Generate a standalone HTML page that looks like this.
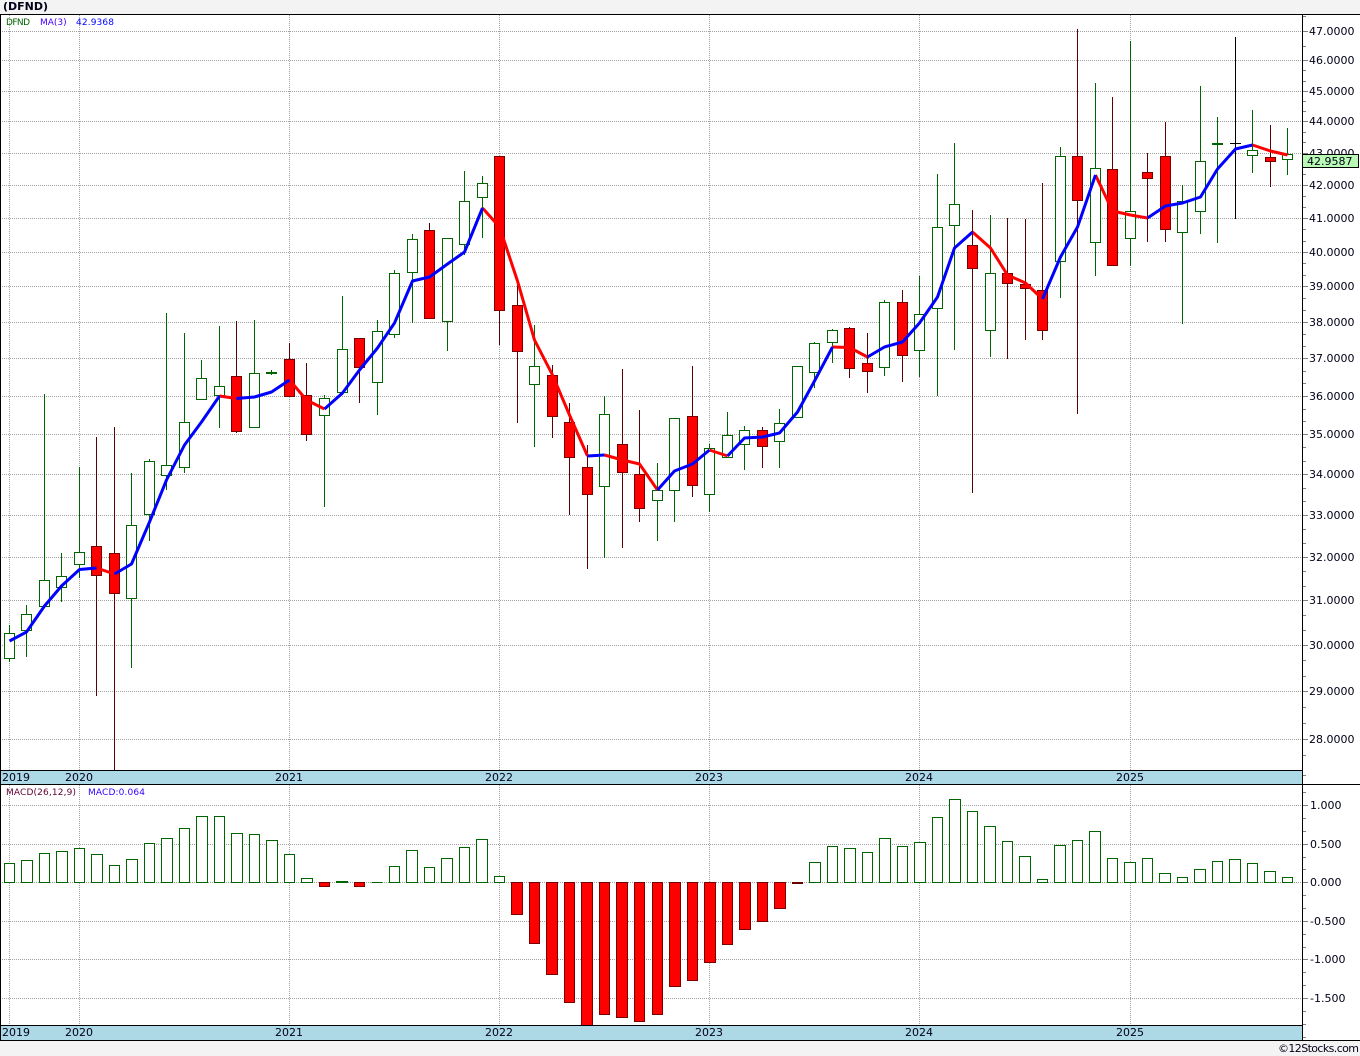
<!DOCTYPE html>
<html lang="en"><head><meta charset="utf-8"><title>DFND</title>
<style>html,body{margin:0;padding:0;background:#f3f3f3;width:1360px;height:1056px;overflow:hidden}svg{position:absolute;left:0;top:0;display:block}text{font-family:"DejaVu Sans","Liberation Sans",sans-serif;font-size:11px;fill:#000018}.s{font-size:9px}</style></head><body>
<svg width="1360" height="1056" viewBox="0 0 1360 1056" xmlns="http://www.w3.org/2000/svg">
<rect x="0" y="0" width="1360" height="1056" fill="#f3f3f3"/>
<rect x="0" y="14" width="1360" height="1027" fill="#fff"/>
<g fill="none" stroke="#a0a0a0" stroke-width="1" stroke-dasharray="1 1" shape-rendering="crispEdges">
<path d="M0 31.5H1303M0 60.5H1303M0 91.5H1303M0 121.5H1303M0 153.5H1303M0 185.5H1303M0 218.5H1303M0 252.5H1303M0 286.5H1303M0 322.5H1303M0 358.5H1303M0 396.5H1303M0 434.5H1303M0 474.5H1303M0 515.5H1303M0 557.5H1303M0 600.5H1303M0 645.5H1303M0 691.5H1303M0 739.5H1303"/>
<path d="M0 805.5H1303M0 844.5H1303M0 882.5H1303M0 921.5H1303M0 959.5H1303M0 998.5H1303"/>
<path d="M9.5 15V770M79.5 15V770M289.5 15V770M499.5 15V770M709.5 15V770M919.5 15V770M1130.5 15V770M9.5 785V1025M79.5 785V1025M289.5 785V1025M499.5 785V1025M709.5 785V1025M919.5 785V1025M1130.5 785V1025"/>
</g>
<g fill="none" stroke="#808080" stroke-width="1" shape-rendering="crispEdges">
<path d="M1303 16.5h3M1303 46.5h3M1303 70.5h3M1303 81.5h3M1303 101.5h3M1303 111.5h3M1303 132.5h3M1303 142.5h3M1303 164.5h3M1303 174.5h3M1303 196.5h3M1303 207.5h3M1303 229.5h3M1303 241.5h3M1303 263.5h3M1303 275.5h3M1303 298.5h3M1303 310.5h3M1303 334.5h3M1303 346.5h3M1303 371.5h3M1303 383.5h3M1303 409.5h3M1303 421.5h3M1303 447.5h3M1303 461.5h3M1303 488.5h3M1303 501.5h3M1303 529.5h3M1303 543.5h3M1303 571.5h3M1303 586.5h3M1303 615.5h3M1303 630.5h3M1303 660.5h3M1303 676.5h3M1303 707.5h3M1303 723.5h3M1303 755.5h3"/>
<path d="M1303 31.5h5M1303 60.5h5M1303 91.5h5M1303 121.5h5M1303 153.5h5M1303 185.5h5M1303 218.5h5M1303 252.5h5M1303 286.5h5M1303 322.5h5M1303 358.5h5M1303 396.5h5M1303 434.5h5M1303 474.5h5M1303 515.5h5M1303 557.5h5M1303 600.5h5M1303 645.5h5M1303 691.5h5M1303 739.5h5"/>
<path d="M1303 775.5h3M1303 792.5h3M1303 818.5h3M1303 831.5h3M1303 857.5h3M1303 869.5h3M1303 895.5h3M1303 908.5h3M1303 934.5h3M1303 947.5h3M1303 972.5h3M1303 985.5h3M1303 1011.5h3M1303 1024.5h3M1303 1037.5h3"/>
<path d="M1303 805.5h5M1303 844.5h5M1303 882.5h5M1303 921.5h5M1303 959.5h5M1303 998.5h5"/>
</g>
<g shape-rendering="crispEdges" stroke-width="1">
<path fill="none" stroke="#006400" d="M9.5 625V662M26.5 605V657M44.5 394V606M61.5 553V602M79.5 467V578M131.5 473V668M149.5 459V541M166.5 313V490M184.5 333V473M201.5 360V399M219.5 326V428M254.5 320V427M271.5 370V375M324.5 395V507M342.5 296V392M377.5 320V415M394.5 270V338M412.5 234V323M447.5 238V351M464.5 171V255M482.5 176V238M534.5 325V447M604.5 396V558M657.5 463V541M674.5 418V522M709.5 444V512M727.5 412V457M744.5 426V470M779.5 409V468M797.5 366V417M814.5 342V388M832.5 329V363M884.5 300V376M919.5 276V377M937.5 174V396M954.5 143V350M990.5 215V357M1060.5 147V298M1095.5 83V276M1130.5 41V266M1182.5 185V324M1200.5 86V234M1217.5 117V243M1252.5 110V173M1287.5 128V175"/>
<path fill="#fff" stroke="#006400" d="M4.5 633.5h10V658.5h-10zM21.5 614.5h10V630.5h-10zM39.5 580.5h10V606.5h-10zM56.5 576.5h10V587.5h-10zM74.5 552.5h10V564.5h-10zM126.5 525.5h10V598.5h-10zM144.5 461.5h10V514.5h-10zM161.5 465.5h10V475.5h-10zM179.5 422.5h10V467.5h-10zM196.5 378.5h10V399.5h-10zM214.5 386.5h10V395.5h-10zM249.5 373.5h10V427.5h-10zM319.5 398.5h10V415.5h-10zM337.5 349.5h10V392.5h-10zM372.5 331.5h10V382.5h-10zM389.5 273.5h10V334.5h-10zM407.5 239.5h10V272.5h-10zM442.5 238.5h10V321.5h-10zM459.5 201.5h10V244.5h-10zM477.5 183.5h10V197.5h-10zM529.5 366.5h10V384.5h-10zM599.5 414.5h10V486.5h-10zM652.5 490.5h10V500.5h-10zM669.5 418.5h10V490.5h-10zM704.5 448.5h10V494.5h-10zM722.5 435.5h10V457.5h-10zM739.5 430.5h10V444.5h-10zM774.5 423.5h10V441.5h-10zM792.5 366.5h10V417.5h-10zM809.5 343.5h10V372.5h-10zM827.5 330.5h10V342.5h-10zM879.5 302.5h10V367.5h-10zM914.5 314.5h10V350.5h-10zM932.5 227.5h10V308.5h-10zM949.5 204.5h10V225.5h-10zM985.5 273.5h10V330.5h-10zM1055.5 156.5h10V261.5h-10zM1090.5 168.5h10V242.5h-10zM1125.5 211.5h10V238.5h-10zM1177.5 201.5h10V232.5h-10zM1195.5 161.5h10V211.5h-10zM1247.5 150.5h10V155.5h-10zM1282.5 154.5h10V159.5h-10z"/>
<rect x="266" y="372" width="11" height="2" fill="#006400"/>
<rect x="1212" y="143" width="11" height="2" fill="#006400"/>
<path fill="none" stroke="#000" d="M1235.5 37V219M1230 143.5h11"/>
<path fill="none" stroke="#5c0000" d="M96.5 437V696M114.5 427V770M236.5 321V433M289.5 343V397M306.5 363V441M359.5 338V403M429.5 223V318M499.5 156V345M517.5 283V423M552.5 365V438M569.5 403V515M587.5 445V569M622.5 369V548M639.5 410V522M692.5 366V497M762.5 427V468M849.5 327V378M867.5 333V393M902.5 290V382M972.5 210V493M1007.5 218V359M1025.5 219V340M1042.5 183V340M1077.5 29V414M1112.5 97V265M1147.5 153V242M1165.5 122V242M1270.5 125V187"/>
<path fill="#f00" stroke="#7a0000" d="M91.5 546.5h10V575.5h-10zM109.5 553.5h10V593.5h-10zM231.5 376.5h10V431.5h-10zM284.5 359.5h10V396.5h-10zM301.5 395.5h10V434.5h-10zM354.5 338.5h10V367.5h-10zM424.5 230.5h10V318.5h-10zM494.5 156.5h10V310.5h-10zM512.5 305.5h10V351.5h-10zM547.5 375.5h10V416.5h-10zM564.5 422.5h10V457.5h-10zM582.5 467.5h10V494.5h-10zM617.5 444.5h10V472.5h-10zM634.5 474.5h10V508.5h-10zM687.5 416.5h10V485.5h-10zM757.5 430.5h10V446.5h-10zM844.5 328.5h10V368.5h-10zM862.5 363.5h10V371.5h-10zM897.5 302.5h10V355.5h-10zM967.5 245.5h10V268.5h-10zM1002.5 273.5h10V283.5h-10zM1020.5 284.5h10V288.5h-10zM1037.5 290.5h10V330.5h-10zM1072.5 156.5h10V200.5h-10zM1107.5 169.5h10V265.5h-10zM1142.5 172.5h10V178.5h-10zM1160.5 156.5h10V229.5h-10zM1265.5 157.5h10V161.5h-10z"/>
<path fill="#fff" stroke="#006400" d="M4.5 882.5V863.5h10V882.5zM21.5 882.5V860.5h11V882.5zM39.5 882.5V853.5h10V882.5zM56.5 882.5V851.5h11V882.5zM74.5 882.5V848.5h10V882.5zM91.5 882.5V854.5h11V882.5zM109.5 882.5V865.5h10V882.5zM126.5 882.5V859.5h11V882.5zM144.5 882.5V843.5h10V882.5zM161.5 882.5V838.5h11V882.5zM179.5 882.5V828.5h10V882.5zM196.5 882.5V816.5h11V882.5zM214.5 882.5V816.5h10V882.5zM231.5 882.5V833.5h11V882.5zM249.5 882.5V834.5h10V882.5zM266.5 882.5V840.5h11V882.5zM284.5 882.5V854.5h10V882.5zM301.5 882.5V878.5h11V882.5zM336.5 882.5V881.5h11V882.5zM371.5 882.5h11zM389.5 882.5V866.5h10V882.5zM406.5 882.5V850.5h11V882.5zM424.5 882.5V867.5h10V882.5zM441.5 882.5V858.5h11V882.5zM459.5 882.5V847.5h10V882.5zM476.5 882.5V839.5h11V882.5zM494.5 882.5V876.5h10V882.5zM809.5 882.5V862.5h11V882.5zM827.5 882.5V846.5h10V882.5zM844.5 882.5V848.5h11V882.5zM862.5 882.5V852.5h10V882.5zM879.5 882.5V838.5h11V882.5zM897.5 882.5V846.5h10V882.5zM914.5 882.5V842.5h11V882.5zM932.5 882.5V817.5h10V882.5zM949.5 882.5V799.5h11V882.5zM967.5 882.5V811.5h10V882.5zM984.5 882.5V826.5h11V882.5zM1002.5 882.5V841.5h10V882.5zM1019.5 882.5V856.5h11V882.5zM1037.5 882.5V879.5h10V882.5zM1054.5 882.5V845.5h11V882.5zM1072.5 882.5V840.5h10V882.5zM1089.5 882.5V831.5h11V882.5zM1107.5 882.5V858.5h10V882.5zM1124.5 882.5V862.5h11V882.5zM1142.5 882.5V858.5h10V882.5zM1159.5 882.5V873.5h11V882.5zM1177.5 882.5V877.5h10V882.5zM1194.5 882.5V869.5h11V882.5zM1212.5 882.5V861.5h10V882.5zM1229.5 882.5V859.5h11V882.5zM1247.5 882.5V863.5h10V882.5zM1264.5 882.5V871.5h11V882.5zM1282.5 882.5V877.5h10V882.5z"/>
<path fill="#f00" stroke="#7a0000" d="M319.5 882.5V886.5h10V882.5zM354.5 882.5V886.5h10V882.5zM511.5 882.5V914.5h11V882.5zM529.5 882.5V943.5h10V882.5zM546.5 882.5V974.5h11V882.5zM564.5 882.5V1002.5h10V882.5zM581.5 882.5V1030h11V882.5zM599.5 882.5V1014.5h10V882.5zM616.5 882.5V1017.5h11V882.5zM634.5 882.5V1021.5h10V882.5zM652.5 882.5V1014.5h10V882.5zM669.5 882.5V986.5h11V882.5zM687.5 882.5V980.5h10V882.5zM704.5 882.5V962.5h11V882.5zM722.5 882.5V944.5h10V882.5zM739.5 882.5V929.5h11V882.5zM757.5 882.5V921.5h10V882.5zM774.5 882.5V908.5h11V882.5z"/>
<rect x="792" y="882" width="11" height="2" fill="#660000"/>
</g>
<g fill="none" stroke-width="3" stroke-linejoin="round" stroke-linecap="butt">
<g stroke="#ff0000">
<polyline points="96.5,568 114.5,574"/>
<polyline points="219.5,396 236.5,398.5"/>
<polyline points="289.5,380 306.5,400 324.5,409"/>
<polyline points="482.5,208 499.5,227 517.5,281 534.5,340 552.5,375 569.5,415 587.5,456"/>
<polyline points="604.5,455 622.5,460 639.5,464 657.5,490"/>
<polyline points="709.5,450 727.5,456"/>
<polyline points="832.5,347 849.5,347.5 867.5,357"/>
<polyline points="972.5,232 990.5,248 1007.5,275 1025.5,283 1042.5,299"/>
<polyline points="1095.5,175 1112.5,211 1130.5,215 1147.5,218"/>
<polyline points="1252.5,145 1270.5,151 1287.5,155"/>
</g>
<g stroke="#0000ff">
<polyline points="9.5,641 26.5,632 44.5,606 61.5,586 79.5,569.5 96.5,568"/>
<polyline points="114.5,574 131.5,564 149.5,522 166.5,480 184.5,445 201.5,422 219.5,396"/>
<polyline points="236.5,398.5 254.5,397 271.5,392 289.5,380"/>
<polyline points="324.5,409 342.5,393 359.5,370 377.5,348 394.5,323 412.5,281 429.5,277 447.5,264 464.5,252 482.5,208"/>
<polyline points="587.5,456 604.5,455"/>
<polyline points="657.5,490 674.5,471 692.5,464 709.5,450"/>
<polyline points="727.5,456 744.5,438 762.5,437 779.5,433 797.5,412 814.5,381 832.5,347"/>
<polyline points="867.5,357 884.5,347 902.5,342 919.5,323 937.5,297 954.5,248 972.5,232"/>
<polyline points="1042.5,299 1060.5,257 1077.5,227 1095.5,175"/>
<polyline points="1147.5,218 1165.5,206 1182.5,203 1200.5,197 1217.5,169 1235.5,149 1252.5,145"/>
</g>
</g>
<g shape-rendering="crispEdges">
<rect x="0" y="770" width="1303" height="15" fill="#add8e6"/>
<rect x="0" y="1025" width="1303" height="16" fill="#add8e6"/>
<rect x="0" y="14" width="1360" height="1" fill="#000"/>
<rect x="0" y="770" width="1303" height="1" fill="#000"/>
<rect x="0" y="784" width="1360" height="1" fill="#000"/>
<rect x="0" y="1025" width="1303" height="1" fill="#000"/>
<rect x="0" y="1040" width="1360" height="1" fill="#000"/>
<rect x="0" y="14" width="1" height="1027" fill="#000"/>
<rect x="1302" y="14" width="1" height="1027" fill="#000"/>
</g>
<text x="3" y="10" style="font-weight:bold">(DFND)</text>
<text class="s" x="6" y="25" style="fill:#006400" textLength="24">DFND</text>
<text class="s" x="40" y="25" style="fill:#4400ff">MA(3)</text>
<text class="s" x="76" y="25" style="fill:#0000ff" textLength="38">42.9368</text>
<text class="s" x="6" y="795" style="fill:#600033" textLength="70">MACD(26,12,9)</text>
<text class="s" x="88" y="795" style="fill:#3300ff" textLength="57">MACD:0.064</text>
<text x="1309" y="35">47.0000</text>
<text x="1309" y="64">46.0000</text>
<text x="1309" y="95">45.0000</text>
<text x="1309" y="125">44.0000</text>
<text x="1309" y="157">43.0000</text>
<text x="1309" y="189">42.0000</text>
<text x="1309" y="222">41.0000</text>
<text x="1309" y="256">40.0000</text>
<text x="1309" y="290">39.0000</text>
<text x="1309" y="326">38.0000</text>
<text x="1309" y="362">37.0000</text>
<text x="1309" y="400">36.0000</text>
<text x="1309" y="438">35.0000</text>
<text x="1309" y="478">34.0000</text>
<text x="1309" y="519">33.0000</text>
<text x="1309" y="561">32.0000</text>
<text x="1309" y="604">31.0000</text>
<text x="1309" y="649">30.0000</text>
<text x="1309" y="695">29.0000</text>
<text x="1309" y="743">28.0000</text>
<rect x="1302.5" y="154.5" width="56" height="13" fill="#b9fbb4" stroke="#000" stroke-width="1" shape-rendering="crispEdges"/>
<text x="1307" y="165">42.9587</text>
<text x="1310" y="809">1.000</text>
<text x="1310" y="848">0.500</text>
<text x="1310" y="886">0.000</text>
<text x="1310" y="925">-0.500</text>
<text x="1310" y="963">-1.000</text>
<text x="1310" y="1002">-1.500</text>
<text x="2" y="781">2019</text>
<text x="65" y="781">2020</text>
<text x="275" y="781">2021</text>
<text x="485" y="781">2022</text>
<text x="695" y="781">2023</text>
<text x="905" y="781">2024</text>
<text x="1116" y="781">2025</text>
<text x="2" y="1036">2019</text>
<text x="65" y="1036">2020</text>
<text x="275" y="1036">2021</text>
<text x="485" y="1036">2022</text>
<text x="695" y="1036">2023</text>
<text x="905" y="1036">2024</text>
<text x="1116" y="1036">2025</text>
<text x="1278" y="1052" textLength="81">©12Stocks.com</text>
</svg>
</body></html>
